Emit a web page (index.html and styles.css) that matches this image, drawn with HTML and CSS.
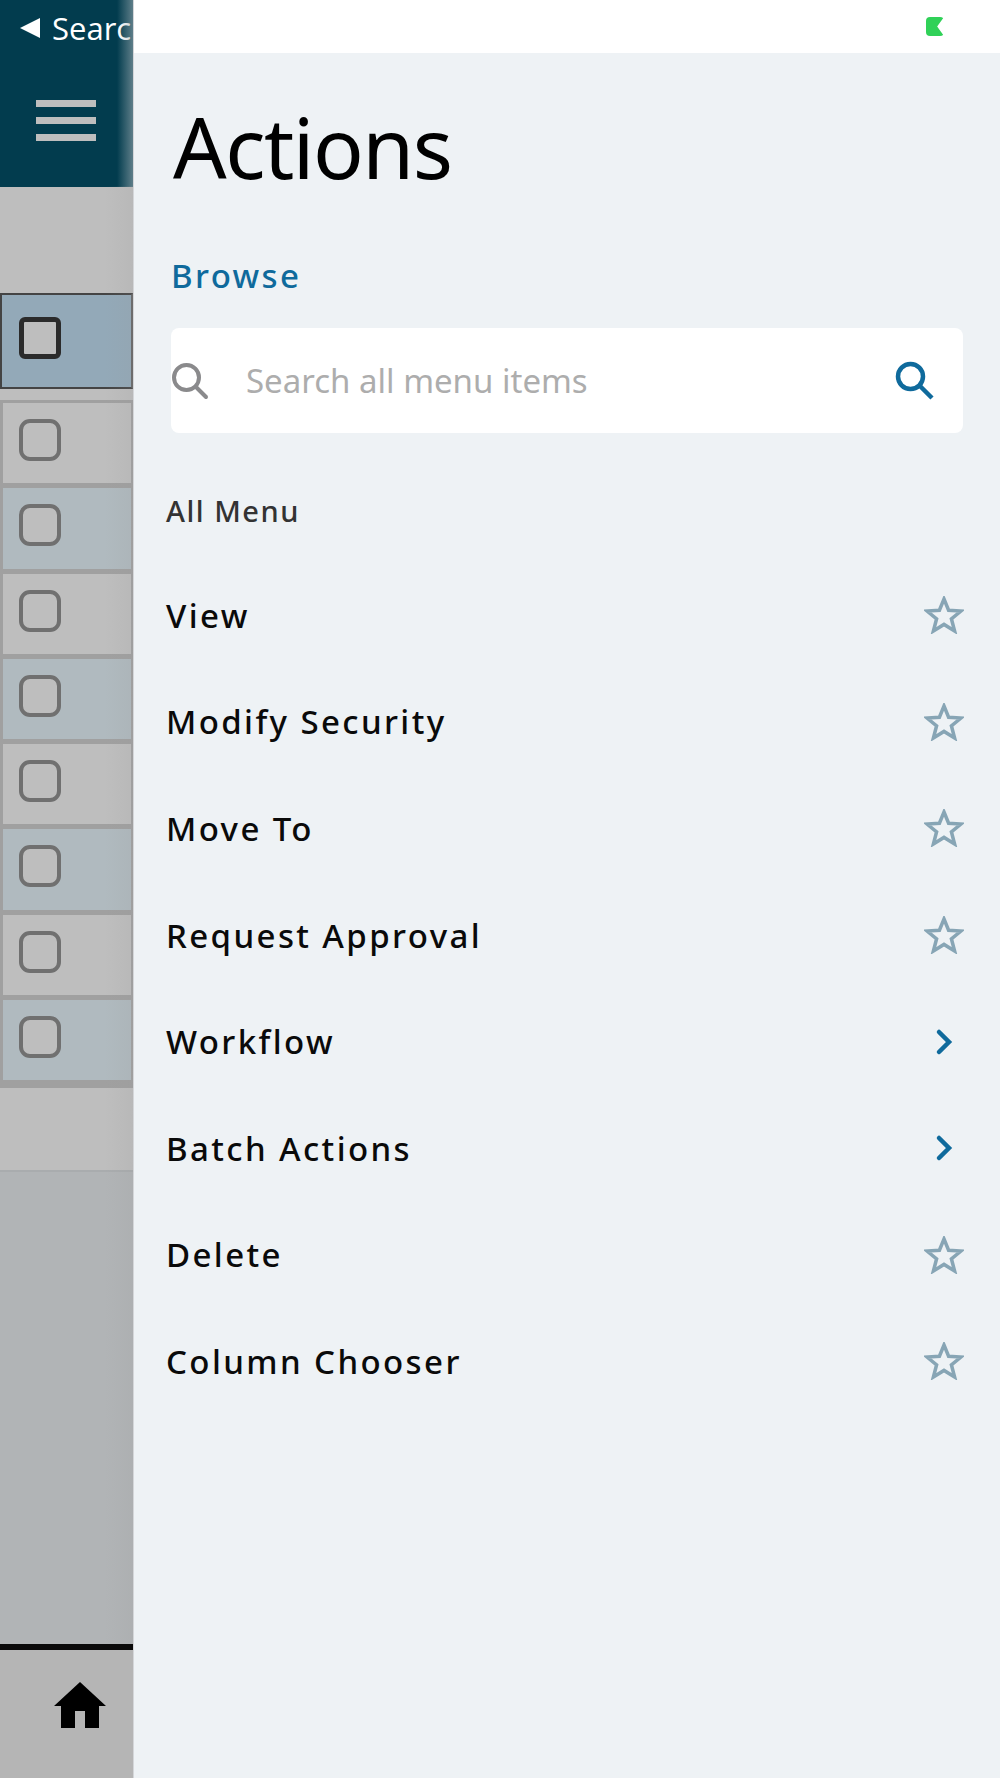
FILE: index.html
```html
<!DOCTYPE html>
<html lang="en">
<head>
    <meta charset="UTF-8">
    <title>Actions</title>
    <link rel="stylesheet" href="styles.css">
</head>
<body>
    <div class="screen">
        <div class="side">
            <div class="side-header">
                <div class="back"><span class="back-arrow"></span><span>Search</span></div>
                <div class="burger"><span></span><span></span><span></span></div>
            </div>
            <div class="side-gap"></div>
            <div class="row-selected"><span class="check-selected"></span></div>
            <div class="rows">
                <div class="row"><span class="check"></span></div>
                <div class="row tinted"><span class="check"></span></div>
                <div class="row"><span class="check"></span></div>
                <div class="row tinted"><span class="check"></span></div>
                <div class="row"><span class="check"></span></div>
                <div class="row tinted"><span class="check"></span></div>
                <div class="row"><span class="check"></span></div>
                <div class="row tinted"><span class="check"></span></div>
            </div>
            <div class="side-blank"></div>
            <div class="side-fill"></div>
            <div class="side-footer">
                <svg class="home" viewBox="0 0 52 46"><path d="M26 0 L52 24 H45 V46 H31 V29 H21 V46 H7 V24 H0 Z"/></svg>
            </div>
        </div>

        <div class="panel">
            <div class="topbar"><span class="battery"></span></div>
            <h1 class="title">Actions</h1>
            <div class="browse">Browse</div>
            <div class="search">
                <svg class="search-grey" viewBox="0 0 38 38"><circle cx="15.5" cy="15.5" r="12.5"/><path d="M25 25 L35 35"/></svg>
                <span class="placeholder">Search all menu items</span>
                <svg class="search-blue" viewBox="0 0 40 40"><circle cx="15.5" cy="15.5" r="12.5"/><path d="M25 25 L37 37"/></svg>
            </div>
            <div class="section">All Menu</div>
            <ul class="menu">
                <li>View<svg class="star" viewBox="0 0 40 38"><use href="#star-shape"/></svg></li>
                <li>Modify Security<svg class="star" viewBox="0 0 40 38"><use href="#star-shape"/></svg></li>
                <li>Move To<svg class="star" viewBox="0 0 40 38"><use href="#star-shape"/></svg></li>
                <li>Request Approval<svg class="star" viewBox="0 0 40 38"><use href="#star-shape"/></svg></li>
                <li>Workflow<svg class="chevron" viewBox="0 0 40 38"><path d="M15 9 L25 19 L15 29"/></svg></li>
                <li>Batch Actions<svg class="chevron" viewBox="0 0 40 38"><path d="M15 9 L25 19 L15 29"/></svg></li>
                <li>Delete<svg class="star" viewBox="0 0 40 38"><use href="#star-shape"/></svg></li>
                <li>Column Chooser<svg class="star" viewBox="0 0 40 38"><use href="#star-shape"/></svg></li>
            </ul>
        </div>
    </div>

    <svg class="defs" width="0" height="0">
        <defs>
            <path id="star-shape" d="M20 3 L24.6 14.2 L37 15 L27.4 22.8 L30.6 35 L20 28.4 L9.4 35 L12.6 22.8 L3 15 L15.4 14.2 Z"/>
        </defs>
    </svg>
</body>
</html>
```

FILE: styles.css
```css
* {
    box-sizing: border-box;
}
body {
    margin: 0;
    background: #eef2f5;
    font-family: "Noto Sans", Arial, sans-serif;
}
.screen {
    display: flex;
    width: 1000px;
    height: 1778px;
    overflow: hidden;
}
.defs {
    position: absolute;
}

/* dimmed page behind the panel */
.side {
    position: relative;
    display: flex;
    flex-direction: column;
    width: 133px;
    flex-shrink: 0;
    overflow: hidden;
    background: #bebebe;
}
.side::after {
    content: "";
    position: absolute;
    top: 186px;
    right: 0;
    bottom: 134px;
    width: 28px;
    background: linear-gradient(to right, rgba(150,150,150,0), rgba(150,150,150,0.14));
    pointer-events: none;
}
.side-header {
    position: relative;
    height: 187px;
    flex-shrink: 0;
    background: #023c4e;
}
.side-header::after {
    content: "";
    position: absolute;
    top: 0;
    right: 0;
    bottom: 0;
    width: 16px;
    background: linear-gradient(to right, rgba(2,60,78,0), rgba(170,180,185,0.55));
}
.back {
    display: flex;
    align-items: center;
    height: 56px;
    padding-left: 20px;
    color: #fff;
    font-family: "Open Sans", Arial, sans-serif;
    font-size: 31px;
    white-space: nowrap;
}
.back-arrow {
    width: 0;
    height: 0;
    margin-right: 12px;
    border-top: 10px solid transparent;
    border-bottom: 10px solid transparent;
    border-right: 20px solid #fff;
}
.burger {
    display: flex;
    flex-direction: column;
    gap: 10px;
    width: 60px;
    margin: 44px 0 0 36px;
}
.burger span {
    height: 7px;
    background: #bebebe;
}
.side-gap {
    height: 106px;
    flex-shrink: 0;
}
.row-selected {
    height: 96px;
    flex-shrink: 0;
    padding: 22px 0 0 17px;
    background: #93a9b8;
    border: 2px solid #444;
    border-right-color: #666;
}
.check-selected {
    display: block;
    width: 42px;
    height: 42px;
    background: #bebebe;
    border: 5px solid #2b2b2b;
    border-radius: 6px;
}
.rows {
    margin-top: 11px;
    padding: 0 2px 7px 3px;
    background: #a0a0a0;
    border-top: 3px solid #a0a0a0;
    height: 688px;
    flex-shrink: 0;
    display: flex;
    flex-direction: column;
    gap: 5px;
}
.row {
    height: 80.3px;
    flex-shrink: 0;
    padding: 16px 0 0 16px;
    background: #bebebe;
}
.row.tinted {
    background: #b0babf;
}
.check {
    display: block;
    width: 42px;
    height: 42px;
    background: #bebebe;
    border: 4px solid #707070;
    border-radius: 11px;
}
.side-blank {
    height: 84px;
    flex-shrink: 0;
    border-bottom: 2px solid #a9acae;
}
.side-fill {
    flex: 1;
    background: #b1b4b6;
}
.side-footer {
    height: 134px;
    flex-shrink: 0;
    padding-top: 32px;
    background: #b5b5b5;
    border-top: 6px solid #0a0a0a;
}
.home {
    display: block;
    width: 52px;
    height: 46px;
    margin-left: 54px;
    fill: #000;
}

/* actions panel */
.panel {
    flex: 1;
    display: flex;
    flex-direction: column;
    border-left: 1px solid #d4d6d9;
    background: #eef2f5;
}
.topbar {
    display: flex;
    justify-content: flex-end;
    align-items: center;
    height: 53px;
    padding-right: 56px;
    background: #fff;
}
.battery {
    width: 18px;
    height: 19px;
    background: #30d158;
    border-radius: 4px;
    clip-path: polygon(0 0, 100% 0, 62% 50%, 100% 100%, 0 100%);
}
.title {
    margin: 40px 0 0 39px;
    font-size: 84px;
    line-height: 108px;
    font-weight: 400;
    letter-spacing: -1.5px;
    color: #000;
}
.browse {
    margin: 53px 0 0 37px;
    font-size: 33px;
    line-height: 44px;
    font-weight: 500;
    letter-spacing: 2.4px;
    color: #0f6a9c;
}
.search {
    display: flex;
    align-items: center;
    height: 105px;
    margin: 30px 37px 0 37px;
    background: #fff;
    border-radius: 8px;
}
.search-grey {
    width: 38px;
    height: 38px;
    flex-shrink: 0;
    fill: none;
    stroke: #8a8a8c;
    stroke-width: 4;
    stroke-linecap: round;
}
.placeholder {
    margin-left: 37px;
    font-size: 33px;
    color: #adadad;
}
.search-blue {
    width: 40px;
    height: 40px;
    margin-left: auto;
    margin-right: 28px;
    fill: none;
    stroke: #0f6a9c;
    stroke-width: 4.5;
}
.section {
    margin: 57px 0 0 32px;
    font-size: 29px;
    line-height: 42px;
    font-weight: 500;
    letter-spacing: 1.5px;
    color: #333;
}
.menu {
    list-style: none;
    margin: 30px 0 0;
    padding: 0 36px 0 32px;
}
.menu li {
    display: flex;
    justify-content: space-between;
    align-items: center;
    height: 106.6px;
    font-size: 33px;
    font-weight: 500;
    letter-spacing: 2.4px;
    color: #0a0a0a;
}
.star {
    width: 40px;
    height: 38px;
    fill: none;
    stroke: #87a5b5;
    stroke-width: 3.5;
}
.chevron {
    width: 40px;
    height: 38px;
    fill: none;
    stroke: #0f6a9c;
    stroke-width: 4.5;
    stroke-linecap: round;
}
```
